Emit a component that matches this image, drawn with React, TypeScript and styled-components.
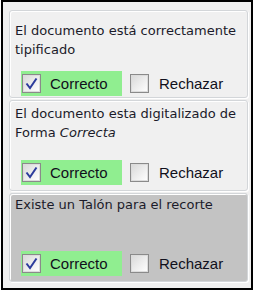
import styled, { createGlobalStyle } from "styled-components";

const GlobalStyle = createGlobalStyle`
  body {
    margin: 0;
    background: #ffffff;
  }
`;

const Frame = styled.div`
  box-sizing: border-box;
  width: 252px;
  height: 290px;
  margin-left: 1px;
  border: 2px solid #000;
  background: #f0f0f0;
  padding: 8px 3px 0 6px;
  display: flex;
  flex-direction: column;
  gap: 2px;
`;

const Panel = styled.div<{ $height: number; $gray?: boolean; $top: number; $bottom: number }>`
  box-sizing: border-box;
  width: 239px;
  height: ${({ $height }) => $height}px;
  border: 1px solid #d3d6d9;
  border-radius: 3px;
  box-shadow: inset 1px 1px 0 #ffffff, 1px 1px 0 #ffffff;
  background: ${({ $gray }) => ($gray ? "#c3c3c3" : "#f0f0f0")};
  padding: ${({ $top }) => $top}px 4px ${({ $bottom }) => $bottom}px 5px;
  display: flex;
  flex-direction: column;
`;

const Question = styled.div`
  font-family: "DejaVu Sans", sans-serif;
  font-size: 13px;
  line-height: 19px;
  color: #1b1b2a;
`;

const Slanted = styled.span`
  font-style: italic;
`;

const Row = styled.div`
  margin-top: auto;
  padding-left: 6px;
  display: flex;
  align-items: center;
`;

const Option = styled.label<{ $checked?: boolean }>`
  box-sizing: border-box;
  display: flex;
  align-items: center;
  height: 25px;
  width: ${({ $checked }) => ($checked ? "101px" : "auto")};
  margin-left: ${({ $checked }) => ($checked ? "0" : "7px")};
  padding-left: 1px;
  gap: ${({ $checked }) => ($checked ? "9px" : "10px")};
  background: ${({ $checked }) => ($checked ? "#90ee90" : "transparent")};
  font-family: "Liberation Sans", Arial, sans-serif;
  font-size: 15px;
  color: #10101c;
`;

const Box = styled.span`
  box-sizing: border-box;
  width: 19px;
  height: 19px;
  border: 1px solid #8a8a8a;
  box-shadow: inset 0 0 0 1px #dcdcdc;
  background: linear-gradient(135deg, #d8d8d8 0%, #f4f4f4 70%, #ffffff 100%);
  display: flex;
  align-items: center;
  justify-content: center;
`;

const CheckBox = ({ checked }: { checked?: boolean }) => (
  <Box>
    {checked && (
      <svg width="13" height="13" viewBox="0 0 13 13">
        <path d="M1.5 6.5 L5 11 L11.5 1.5" fill="none" stroke="#2c3c9c" strokeWidth="2" />
      </svg>
    )}
  </Box>
);

const items = [
  { text: <span>El documento está correctamente tipificado</span>, height: 88, top: 10, bottom: 1 },
  {
    text: (
      <>
        <span>El documento esta digitalizado de </span>
        <span>
          Forma <Slanted>Correcta</Slanted>
        </span>
      </>
    ),
    height: 91,
    top: 3,
    bottom: 5,
  },
  { text: <span>Existe un Talón para el recorte</span>, height: 89, top: 1, bottom: 5, gray: true },
];

const App = () => {
  return (
    <>
      <GlobalStyle />
      <Frame>
        {items.map((el, index) => (
          <Panel key={index} $height={el.height} $top={el.top} $bottom={el.bottom} $gray={el.gray}>
            <Question>{el.text}</Question>
            <Row>
              <Option $checked>
                <CheckBox checked />
                Correcto
              </Option>
              <Option>
                <CheckBox />
                Rechazar
              </Option>
            </Row>
          </Panel>
        ))}
      </Frame>
    </>
  );
};

export default App;
